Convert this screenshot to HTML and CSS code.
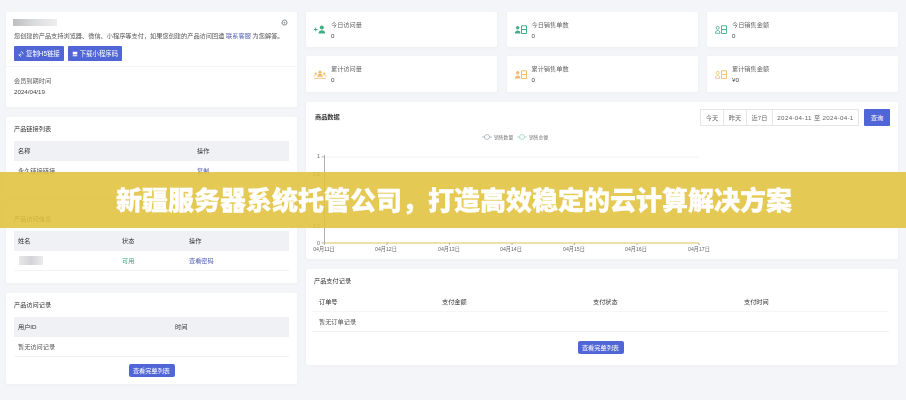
FILE: index.html
```html
<!DOCTYPE html>
<html lang="zh-CN">
<head>
<meta charset="utf-8">
<title>产品概览</title>
<link rel="stylesheet" href="styles.css">
</head>
<body>
<div class="dashboard">
  <div class="col-left">
    <section class="card account">
      <div class="account-top">
        <div class="account-head">
          <span class="masked-title"></span>
          <svg class="gear" viewBox="0 0 8 8"><circle cx="4" cy="4" r="2.8" fill="none" stroke="#8d929c" stroke-width="1.2"/><circle cx="4" cy="4" r="1" fill="#8d929c"/></svg>
        </div>
        <p class="account-desc">您创建的产品支持浏览器、微信、小程序等支付，如果您创建的产品访问回遭 <a class="link">联系客服</a> 为您解答。</p>
        <div class="account-actions">
          <button class="btn btn-lg"><svg class="btn-icon" viewBox="0 0 8 8"><path d="M1.5 6.5 4 4M3.5 2.2 5 .9l2 2-1.4 1.5M4.4 5.8 3 7.1l-2-2 1.400-1.500" fill="none" stroke="#fff" stroke-width="1"/></svg>复制H5链接</button>
          <button class="btn btn-lg"><svg class="btn-icon" viewBox="0 0 8 8"><path d="M1 1h6v3.500H1zM1 5.500h6V7H1z" fill="#fff"/></svg>下载小程序码</button>
        </div>
      </div>
      <div class="account-expiry">
        <div class="muted">会员到期时间</div>
        <div class="expiry-date">2024/04/19</div>
      </div>
    </section>

    <section class="card panel panel-links">
      <h3 class="panel-title">产品链接列表</h3>
      <table class="table">
        <colgroup><col class="w179"><col></colgroup>
        <thead><tr><th>名称</th><th>操作</th></tr></thead>
        <tbody><tr><td>永久链接链接</td><td><a class="link">复制</a></td></tr></tbody>
      </table>
    </section>

    <section class="card panel panel-access">
      <h3 class="panel-title">产品访问信息</h3>
      <table class="table">
        <colgroup><col class="w104"><col class="w67"><col></colgroup>
        <thead><tr><th>姓名</th><th>状态</th><th>操作</th></tr></thead>
        <tbody><tr><td><span class="masked-name"></span></td><td><span class="ok">可用</span></td><td><a class="link">查看密码</a></td></tr></tbody>
      </table>
    </section>

    <section class="card panel panel-log">
      <h3 class="panel-title">产品访问记录</h3>
      <table class="table">
        <colgroup><col class="w157"><col></colgroup>
        <thead><tr><th>用户ID</th><th>时间</th></tr></thead>
        <tbody><tr><td>暂无访问记录</td><td></td></tr></tbody>
      </table>
      <div class="panel-foot"><button class="btn btn-sm">查看完整列表</button></div>
    </section>
  </div>

  <div class="col-right">
    <div class="stats">
      <div class="card stat">
        <svg class="stat-icon" viewBox="0 0 12 9"><path d="M0 4.500h3.600M1.800 2.700v3.600" stroke="#3fae85" stroke-width="1"/><circle cx="7.800" cy="2.400" r="2" fill="#3fae85"/><path d="M4.500 8.500c0-2.400 1.500-3.300 3.300-3.300s3.400.9 3.400 3.300z" fill="#3fae85"/></svg>
        <div><div class="stat-label">今日访问量</div><div class="stat-value">0</div></div>
      </div>
      <div class="card stat">
        <svg class="stat-icon" viewBox="0 0 12 9"><circle cx="2.700" cy="2.800" r="1.700" fill="#3fae85"/><path d="M0 8.500c0-2.200 1.200-3 2.700-3s2.700.8 2.700 3z" fill="#3fae85"/><path d="M6.500.8h5v7.700h-5zM6.500 4.500h5" fill="none" stroke="#3fae85" stroke-width="1"/></svg>
        <div><div class="stat-label">今日销售单数</div><div class="stat-value">0</div></div>
      </div>
      <div class="card stat">
        <svg class="stat-icon" viewBox="0 0 12 9"><circle cx="2.700" cy="2.800" r="1.500" fill="none" stroke="#3fae85" stroke-width=".8"/><path d="M.4 8.300c0-2 1-2.800 2.300-2.800s2.300.8 2.300 2.800z" fill="none" stroke="#3fae85" stroke-width=".8"/><path d="M6.500.8h5v7.700h-5zM6.500 4.500h5" fill="none" stroke="#3fae85" stroke-width=".9"/></svg>
        <div><div class="stat-label">今日销售金额</div><div class="stat-value">0</div></div>
      </div>
      <div class="card stat">
        <svg class="stat-icon" viewBox="0 0 12 9"><circle cx="6" cy="2.200" r="1.600" fill="#eebd6b"/><path d="M3.300 6.800c0-2 1.200-3 2.700-3s2.700 1 2.700 3z" fill="#eebd6b"/><circle cx="1.800" cy="3.500" r="1.100" fill="#eebd6b"/><circle cx="10.200" cy="3.500" r="1.100" fill="#eebd6b"/><path d="M0 6.800c0-1.300.7-2 1.800-2 .5 0 .8.100 1 .3M12 6.800c0-1.300-.7-2-1.800-2-.5 0-.8.100-1 .3M0 8.300h12" fill="none" stroke="#eebd6b" stroke-width=".8"/></svg>
        <div><div class="stat-label">累计访问量</div><div class="stat-value">0</div></div>
      </div>
      <div class="card stat">
        <svg class="stat-icon" viewBox="0 0 12 9"><circle cx="2.700" cy="2.800" r="1.700" fill="#eebd6b"/><path d="M0 8.500c0-2.200 1.200-3 2.700-3s2.700.8 2.700 3z" fill="#eebd6b"/><path d="M6.500.8h5v7.700h-5zM6.500 4.500h5" fill="none" stroke="#eebd6b" stroke-width="1"/></svg>
        <div><div class="stat-label">累计销售单数</div><div class="stat-value">0</div></div>
      </div>
      <div class="card stat">
        <svg class="stat-icon" viewBox="0 0 12 9"><circle cx="2.700" cy="2.800" r="1.500" fill="none" stroke="#eebd6b" stroke-width=".8"/><path d="M.4 8.300c0-2 1-2.800 2.300-2.800s2.300.8 2.300 2.800z" fill="none" stroke="#eebd6b" stroke-width=".8"/><path d="M6.500.8h5v7.700h-5zM6.500 4.500h5" fill="none" stroke="#eebd6b" stroke-width=".9"/></svg>
        <div><div class="stat-label">累计销售金额</div><div class="stat-value">¥0</div></div>
      </div>
    </div>

    <section class="card chart-card">
      <div class="chart-head">
        <h3 class="chart-title">商品数据</h3>
        <div class="filters">
          <div class="range">
            <span class="range-item">今天</span>
            <span class="range-item">昨天</span>
            <span class="range-item">近7日</span>
            <span class="range-item range-input">2024-04-11 至 2024-04-1</span>
          </div>
          <button class="btn btn-query">查询</button>
        </div>
      </div>
      <svg class="chart" viewBox="0 0 592 133">
        <!-- legend -->
        <g fill="none" stroke-width=".7">
          <path d="M176 11h10" stroke="#9aa3b5"/>
          <circle cx="181" cy="11" r="2.500" fill="#fff" stroke="#9aa3b5"/>
          <path d="M211 11h10" stroke="#8fd3bd"/>
          <circle cx="216" cy="11" r="2.500" fill="#fff" stroke="#8fd3bd"/>
        </g>
        <g class="legend-text">
          <text x="188" y="13">销售数量</text>
          <text x="223" y="13">销售金额</text>
        </g>
        <!-- grid -->
        <g stroke="#eceef1" stroke-width=".8">
          <path d="M18.500 31H393M18.500 48.200H393M18.500 65.400H393M18.500 82.600H393M18.500 99.800H393"/>
        </g>
        <!-- axes -->
        <path d="M18.500 29v88" stroke="#9a9a9a" stroke-width=".8" fill="none"/>
        <path d="M18.500 117H393" stroke="#dcc255" stroke-width="1" fill="none"/>
        <path d="M15.500 31h3M15.500 48.200h3M15.500 65.400h3M15.500 82.600h3M15.500 99.800h3M15.500 117h3M18.500 117v2M81 117v2M143.500 117v2M206 117v2M268.500 117v2M331 117v2M393 117v2" stroke="#9a9a9a" stroke-width=".7" fill="none"/>
        <g class="axis-text" text-anchor="end">
          <text x="14" y="32">1</text>
          <text x="14" y="50">0.8</text>
          <text x="14" y="102">0.2</text>
          <text x="14" y="119">0</text>
        </g>
        <g class="axis-text" text-anchor="middle">
          <text x="18" y="125">04月11日</text>
          <text x="80" y="125">04月12日</text>
          <text x="143" y="125">04月13日</text>
          <text x="205" y="125">04月14日</text>
          <text x="268" y="125">04月15日</text>
          <text x="330" y="125">04月16日</text>
          <text x="393" y="125">04月17日</text>
        </g>
      </svg>
    </section>

    <section class="card pay-card">
      <h3 class="panel-title">产品支付记录</h3>
      <table class="table table-plain">
        <colgroup><col class="w123"><col class="w151"><col class="w151"><col></colgroup>
        <thead><tr><th>订单号</th><th>支付金额</th><th>支付状态</th><th>支付时间</th></tr></thead>
        <tbody><tr><td>暂无订单记录</td><td></td><td></td><td></td></tr></tbody>
      </table>
      <div class="panel-foot"><button class="btn btn-sm">查看完整列表</button></div>
    </section>
  </div>
</div>

<div class="banner">新疆服务器系统托管公司，打造高效稳定的云计算解决方案</div>
</body>
</html>
```

FILE: styles.css
```css
* { box-sizing: border-box; }

html, body { margin: 0; height: 100%; }

body {
  position: relative;
  width: 906px;
  height: 400px;
  overflow: hidden;
  background: #f4f5f8;
  font-family: "Liberation Sans", "Noto Sans CJK SC", sans-serif;
  font-size: 6.2px;
  color: #555;
}

.dashboard {
  display: grid;
  grid-template-columns: 291px 592px;
  column-gap: 9px;
  padding: 12px 8px 0 6px;
  filter: blur(0.6px);
}

.col-left, .col-right { display: flex; flex-direction: column; }

.card {
  background: #fff;
  border-radius: 2px;
  box-shadow: 0 1px 4px rgba(120, 130, 150, 0.06);
}

/* account summary */
.account { height: 95px; margin-bottom: 10px; }
.account-top { height: 55px; padding: 7px 8px 0; border-bottom: 1px solid #f3f4f6; }
.account-head { display: flex; justify-content: space-between; align-items: center; height: 7px; }
.masked-title {
  width: 44px;
  height: 7px;
  margin-left: -1px;
  background: linear-gradient(90deg, #bcbec0, #dcdddf 50%, #eeeeef);
}
.gear { width: 7px; height: 7px; margin-right: 1px; }
.account-desc { margin: 5px 0 0; line-height: 9px; height: 9px; white-space: nowrap; color: #555; }
.account-actions { display: flex; gap: 4px; margin-top: 6px; }
.account-expiry { padding: 9px 8px 0; }
.muted { line-height: 9px; color: #666; }
.expiry-date { margin-top: 2px; line-height: 9px; color: #444; }

.link { color: #4f5bb0; }
.ok { color: #3fa67f; }

/* buttons */
.btn {
  display: inline-flex;
  align-items: center;
  justify-content: center;
  border: 0;
  border-radius: 1px;
  padding: 0;
  background: #5166d6;
  color: #fff;
  font: inherit;
}
.btn-lg { height: 15px; padding: 0 4px; gap: 2px; font-size: 6.4px; }
.btn-icon { width: 6px; height: 6px; }
.btn-sm { height: 13.500px; width: 46px; border-radius: 2px; font-size: 6.200px; }
.btn-query { width: 26px; height: 17px; }

/* list panels */
.panel { padding: 6px 8px 0; margin-bottom: 10px; }
.panel-links { height: 80px; }
.panel-access { height: 76px; }
.panel-log { height: 91px; }
.panel-title {
  margin: 0 0 7px;
  font-size: 6.200px;
  font-weight: 400;
  line-height: 11px;
  color: #333;
}

.table { width: 100%; border-collapse: collapse; table-layout: fixed; }
.table th {
  height: 19.500px;
  padding: 0 4px;
  background: #eff1f5;
  text-align: left;
  font-weight: 400;
  color: #333;
}
.table td {
  height: 19.500px;
  padding: 0 4px;
  border-bottom: 1px solid #f1f2f4;
  color: #555;
}
.table-plain { margin-top: 1px; }
.table-plain th { background: #fff; padding: 0 7px; color: #333; border-bottom: 1px solid #f5f6f7; }
.table-plain td { padding: 0 7px; }

.w104 { width: 104px; }
.w67 { width: 67px; }
.w179 { width: 179px; }
.w157 { width: 157px; }
.w123 { width: 123px; }
.w151 { width: 151px; }

.masked-name {
  display: block;
  width: 24px;
  height: 9px;
  margin-left: 1px;
  background: linear-gradient(90deg, #e8e8e9, #d4d4d6 50%, #ececed);
}

.panel-foot { display: flex; justify-content: center; margin-top: 7px; }

/* stat tiles */
.stats {
  display: grid;
  grid-template-columns: repeat(3, 191px);
  grid-template-rows: 35px 36px;
  justify-content: space-between;
  row-gap: 9px;
  margin-bottom: 10px;
}
.stat { display: flex; align-items: center; gap: 5px; padding-left: 8px; }
.stat-icon { width: 12px; height: 9px; flex: none; }
.stat-label { line-height: 9px; color: #666; }
.stat-value { margin-top: 2px; line-height: 9px; color: #444; }

/* chart */
.chart-card { height: 157px; margin-bottom: 10px; }
.chart-head {
  display: flex;
  justify-content: space-between;
  align-items: flex-start;
  height: 24px;
  padding: 7px 8px 0 9px;
}
.chart-title { margin: 2px 0 0; font-size: 6.200px; line-height: 12px; font-weight: 700; color: #333; }
.filters { display: flex; gap: 5px; }
.range { display: flex; height: 17px; border: 1px solid #e4e6ea; width: 159px; }
.range-item {
  display: flex;
  align-items: center;
  justify-content: center;
  width: 23px;
  border-right: 1px solid #e4e6ea;
  color: #666;
}
.range-item:nth-child(3) { width: 26px; }
.range-input { flex: 1; white-space: nowrap; overflow: hidden; border-right: 0; letter-spacing: 0.33px; }

.chart { display: block; width: 592px; height: 133px; }
.legend-text { font-size: 4.800px; fill: #777; }
.axis-text { font-size: 5.200px; fill: #666; }

/* payment records */
.pay-card { height: 96px; padding: 6px 9px 0 6px; }
.pay-card .panel-title { margin: 0 0 6px 2px; }
.pay-card .panel-foot { margin-top: 9px; }

/* headline strip across the page */
.banner {
  position: absolute;
  left: 0;
  right: 0;
  top: 172px;
  height: 56px;
  display: flex;
  align-items: center;
  justify-content: center;
  padding: 0 0 2px 2px;
  background: rgba(224, 194, 60, 0.88);
  color: #fff;
  font-family: "Noto Sans CJK SC", sans-serif;
  font-size: 26px;
  font-weight: 900;
  line-height: 1;
  -webkit-text-stroke: 0.3px #fff;
}
```
